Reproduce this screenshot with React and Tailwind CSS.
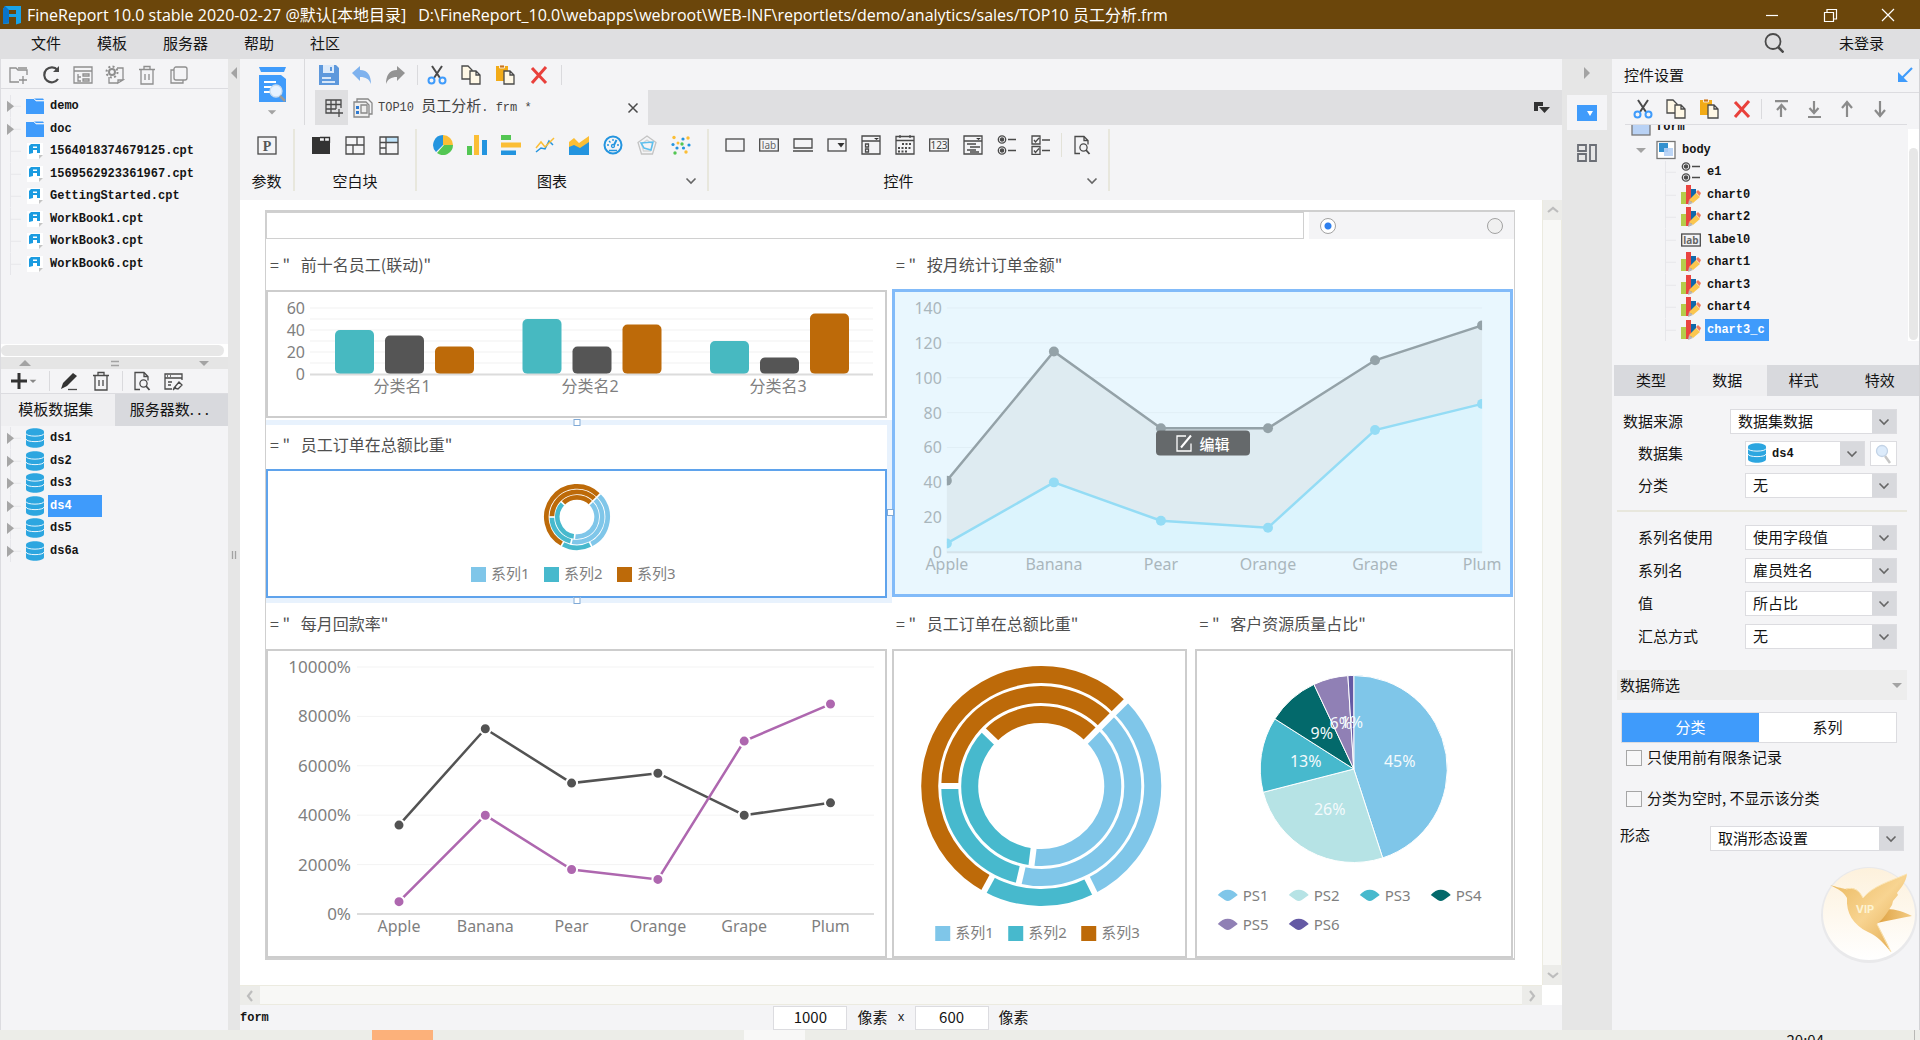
import React, { useState } from 'react';

const files = [
  { name: 'demo', folder: true },
  { name: 'doc', folder: true },
  { name: '1564018374679125.cpt' },
  { name: '1569562923361967.cpt' },
  { name: 'GettingStarted.cpt' },
  { name: 'WorkBook1.cpt' },
  { name: 'WorkBook3.cpt' },
  { name: 'WorkBook6.cpt' },
];

const datasets = ['ds1', 'ds2', 'ds3', 'ds4', 'ds5', 'ds6a'];

const widgets = [
  { name: 'e1', icon: 'radio' },
  { name: 'chart0', icon: 'chart' },
  { name: 'chart2', icon: 'chart' },
  { name: 'label0', icon: 'label' },
  { name: 'chart1', icon: 'chart' },
  { name: 'chart3', icon: 'chart' },
  { name: 'chart4', icon: 'chart' },
  { name: 'chart3_c', icon: 'chart' },
];

const fruits = ['Apple', 'Banana', 'Pear', 'Orange', 'Grape', 'Plum'];

const SKY = '#7fc6e9';
const TEAL = '#47b9cd';
const BROWN = '#bd6a09';
const DARK = '#555555';

/* ---------- icons ---------- */

const Icon = ({ children, className = 'size-5', box = '0 0 20 20' }) => (
  <svg viewBox={box} className={`shrink-0 ${className}`} fill="none" stroke="#4a4a4a" strokeWidth="1.3" aria-hidden="true">
    {children}
  </svg>
);

const Logo = () => (
  <Icon className="size-5">
    <g stroke="none">
      <path d="M3 1h16v17l-5 1.5V12H7v6.5L1 19V4z" fill="#1aa3e8" />
      <path d="M3 1L1 4v15l6-1.5V5z" fill="#0b74c9" />
      <path d="M7 5h7v4H7z" fill="#6b460b" />
    </g>
  </Icon>
);

const FolderIcon = () => (
  <Icon className="size-[18px]" box="0 0 18 18">
    <path d="M0 2h8l2 2h8v13H0z" fill="#3f9bfb" stroke="none" />
    <path d="M8 1.5h9l1 1.5H10z" fill="#3f9bfb" stroke="none" />
    <path d="M8 2l2 2h8" stroke="#d8ebff" strokeWidth="0.8" />
  </Icon>
);

const FileIcon = () => (
  <Icon className="size-[18px]" box="0 0 18 18">
    <path d="M1 1h16v12l-4 4H1z" fill="#fff" stroke="none" />
    <path d="M17 13h-4v4z" fill="#c4c4c4" stroke="none" />
    <path d="M5 2h9v9h-3V8H7v3l-4 1V4z" fill="#1b9be0" stroke="none" />
    <path d="M7 4.5h4V6H7z" fill="#fff" stroke="none" />
  </Icon>
);

const DbIcon = () => (
  <Icon>
    <path d="M1 4c0-5 18-5 18 0v12c0 5-18 5-18 0z" fill="#2ca6e0" stroke="none" />
    <path d="M1 5.5c0 3.500 18 3.500 18 0M1 11c0 3.500 18 3.500 18 0" stroke="#eaf6fd" strokeWidth="1" />
  </Icon>
);

const ScissorsIcon = () => (
  <Icon>
    <path d="M5 1l8 12M15 1L7 13" strokeWidth="2" />
    <circle cx="4.5" cy="15.5" r="3" stroke="#3f9bfb" strokeWidth="2" />
    <circle cx="15.5" cy="15.5" r="3" stroke="#3f9bfb" strokeWidth="2" />
  </Icon>
);

const CopyIcon = () => (
  <Icon>
    <path d="M1 1h6l4 4v9H1z" fill="#fff8e6" />
    <path d="M9 6h6l4 4v9H9zM15 6v4h4" fill="#fff8e6" />
  </Icon>
);

const PasteIcon = () => (
  <Icon>
    <path d="M1 1h12v15H1z" fill="#f2ab17" stroke="none" />
    <path d="M4.5 0h5v3h-5z" fill="#c8741e" stroke="#fff" strokeWidth="0.8" />
    <path d="M9 6h6l4 4v9H9zM15 6v4h4" fill="#fff8e6" />
  </Icon>
);

const DeleteIcon = () => (
  <Icon>
    <path d="M3 3l14 15M17 2L3 18" stroke="#e9403b" strokeWidth="3" />
  </Icon>
);

const TrashIcon = ({ color = '#8e8e8e' }) => (
  <Icon>
    <path d="M2 4.5h16M7 4V1.5h6V4M4 5v14h12V5M8 9v6M12 9v6" stroke={color} />
  </Icon>
);

const LabelIcon = () => (
  <Icon>
    <rect x="0.7" y="4" width="18.6" height="12" />
    <text x="10" y="14" textAnchor="middle" fontSize="10" fill="#666" stroke="none" fontFamily="Noto Sans">lab</text>
  </Icon>
);

const RadioListIcon = () => (
  <Icon>
    <circle cx="5" cy="4.5" r="3.7" />
    <circle cx="5" cy="4.5" r="1.6" fill="#4a4a4a" />
    <circle cx="5" cy="15.5" r="3.7" />
    <circle cx="5" cy="15.5" r="1.6" fill="#4a4a4a" />
    <path d="M11 4.5h8M11 15.5h8" />
  </Icon>
);

const ChartWidgetIcon = () => (
  <Icon>
    <g stroke="none">
      <path d="M0 7h5v12H0z" fill="#b5cc4b" />
      <path d="M5 0h5v19H5z" fill="#ea4440" />
      <path d="M10 4h5v9l-5 5z" fill="#1068ab" />
      <path d="M8 15l7-7 4 4-7 6z" fill="#fbc64f" />
      <path d="M15 7l2-2 3 3-1.500 3z" fill="#f2785b" />
      <path d="M8 15l4 3-5 2z" fill="#b9b9b9" />
    </g>
  </Icon>
);

const DocSearchIcon = () => (
  <Icon>
    <path d="M8 18.5H3v-17h9l4 4v4M12 1.5v4h4" />
    <circle cx="11.5" cy="12.5" r="3.6" />
    <path d="M14 15l3.5 4" strokeWidth="1.8" />
  </Icon>
);

const Chevron = ({ className = 'size-3' }) => (
  <Icon className={className} box="0 0 12 12">
    <path d="M1.5 3.5L6 8l4.5-4.5" stroke="#666" strokeWidth="1.6" />
  </Icon>
);

const Triangle = ({ d, className = 'size-3', color = '#a3a3a3' }) => (
  <Icon className={className} box="0 0 12 12">
    <path d={d} fill={color} stroke="none" />
  </Icon>
);

const UP = 'M0 9L6 3l6 6z';
const DOWN = 'M1 4h10L6 9z';
const LEFT = 'M9 0v12L3 6z';
const RIGHT = 'M3 0v12L9 6z';

const ArrowIcon = ({ d }) => (
  <Icon>
    <path d={d} stroke="#8b8b8b" strokeWidth="2.2" />
  </Icon>
);

const chartIcons = {
  饼图: (
    <g stroke="none">
      <path d="M10 10V0A10 10 0 003 17z" fill="#2394df" />
      <path d="M10 10V0a10 10 0 0110 10z" fill="#fbbe35" />
      <path d="M11 10h9A10 10 0 014 18z" fill="#53c653" />
    </g>
  ),
  柱形图: (
    <g stroke="none">
      <path d="M0 11h5v9H0z" fill="#53c653" />
      <path d="M7 0h5v20H7z" fill="#fbbe35" />
      <path d="M15 5h5v15h-5z" fill="#2394df" />
    </g>
  ),
  条形图: (
    <g stroke="none">
      <path d="M0 0h10v5H0z" fill="#53c653" />
      <path d="M0 7.5h20v5H0z" fill="#fbbe35" />
      <path d="M0 15.500h15v5H0z" fill="#2394df" />
    </g>
  ),
  折线图: (
    <g strokeWidth="1.5">
      <path d="M1 17l5-4 4 1 4-8 4 4" stroke="#2394df" />
      <path d="M1 13l5-6 4 5 9-9" stroke="#fbbe35" />
    </g>
  ),
  面积图: (
    <g stroke="none">
      <path d="M0 7l5-4 5 5 10-7v12H0z" fill="#fbbe35" />
      <path d="M0 12l5-2 6 3 9-6v13H0z" fill="#2394df" />
    </g>
  ),
  仪表盘: (
    <g stroke="#2394df">
      <circle cx="10" cy="10" r="8.5" strokeWidth="2" />
      <path d="M4 10h2M14 10h2M10 4v2M6 6l1.5 1.5M6 15.5h8" />
      <path d="M13.5 5L11 10" strokeWidth="2" />
      <circle cx="10" cy="11" r="1.5" />
    </g>
  ),
  雷达图: (
    <g>
      <path d="M10 1l9 6.5L15.5 19h-11L1 7.5z" stroke="#c4c4c4" />
      <path d="M10 5l5.5 4-2 7h-7l-2-7z" stroke="#d5d5d5" />
      <path d="M4 8l12-1-2 8-7-2z" stroke="#5cbfee" strokeWidth="1.5" />
    </g>
  ),
  散点图: (
    <g stroke="none">
      <g fill="#fbbe35"><circle cx="3" cy="2.5" r="1.7" /><circle cx="17" cy="3" r="1.7" /><circle cx="7" cy="8" r="1.5" /><circle cx="15" cy="17" r="1.7" /></g>
      <g fill="#2394df"><circle cx="12" cy="4" r="1.6" /><circle cx="2" cy="9.5" r="1.6" /><circle cx="18" cy="10" r="1.6" /><circle cx="12.5" cy="13" r="1.6" /><circle cx="6" cy="13" r="1.6" /></g>
      <g fill="#53c653"><circle cx="11" cy="9" r="1.7" /><circle cx="4" cy="18" r="1.7" /></g>
    </g>
  ),
};

const controlIcons = {
  文本框: <rect x="1" y="4" width="18" height="12" />,
  标签: (
    <>
      <rect x="0.7" y="4" width="18.6" height="12" />
      <text x="10" y="14" textAnchor="middle" fontSize="10" fill="#666" stroke="none" fontFamily="Noto Sans">lab</text>
    </>
  ),
  按钮: <path d="M1 4h18v9H1zM0 16h20" />,
  下拉框: <><rect x="1" y="4" width="18" height="12" /><path d="M10.5 8h7L14 12.5z" fill="#333" stroke="none" /></>,
  下拉复选框: <><path d="M1 1h18v18H1zM1 6h18M4.5 9h3v3h-3zM4.5 14h3v3h-3z" /><path d="M13 3h5l-2.500 2z" fill="#333" stroke="none" /></>,
  日期: <><path d="M1 1.5h18V19H1zM1 5.5h18M5 0v3M15 0v3" /><path d="M7 9h10M3 13h14M3 16.5h9" strokeDasharray="2 1.5" strokeWidth="2" /></>,
  数字: (
    <>
      <rect x="0.7" y="4" width="18.6" height="12" />
      <text x="10" y="13.5" textAnchor="middle" fontSize="10" fill="#444" stroke="none" fontFamily="Noto Sans">123</text>
    </>
  ),
  下拉树: <><path d="M1 1h18v18H1zM1 6h18M4 9h9M7 12h10M4 15h9M7 17h9" /><path d="M13 3h5l-2.500 2z" fill="#333" stroke="none" /></>,
  单选按钮组: (
    <>
      <circle cx="5" cy="4.5" r="3.7" /><circle cx="5" cy="4.5" r="1.6" fill="#4a4a4a" />
      <circle cx="5" cy="15.5" r="3.7" /><circle cx="5" cy="15.5" r="1.6" fill="#4a4a4a" />
      <path d="M11 4.5h8M11 15.5h8" />
    </>
  ),
  复选框组: <path d="M1 1h8v8H1zM1 11.5h8v8H1zM3 5l1.5 2L8 3M3 15.5l1.5 2L8 13.5M11 5h8M11 15.500h8" />,
};

/* ---------- small building blocks ---------- */

const IconButton = ({ label, children, className = '' }) => (
  <button aria-label={label} className={`flex size-5 shrink-0 items-center justify-center ${className}`}>
    {children}
  </button>
);

const TreeBranch = ({ arrow }) => (
  <svg viewBox="0 0 22 22" preserveAspectRatio="none" className="h-full w-[22px] shrink-0" aria-hidden="true">
    <path d="M9.5 0v22M10 11h10" stroke="#e6e6ea" fill="none" />
    {arrow && <path d="M6 5.5v11l7-5.5z" fill="#a6a6a6" />}
  </svg>
);

const Select = ({ id, value, className, icon }) => (
  <div className={`relative h-[25px] border border-[#dcdce0] bg-white ${className}`}>
    {icon && <span className="pointer-events-none absolute top-px left-px">{icon}</span>}
    <select
      id={id}
      className={`block h-full w-full appearance-none bg-transparent leading-5 outline-none ${icon ? "pl-[26px] font-['Liberation_Mono',monospace] text-[12px] font-bold" : 'pb-[2px] pl-[7px]'}`}
    >
      <option>{value}</option>
    </select>
    <span className="pointer-events-none absolute inset-y-0 right-0 flex w-6 items-center justify-center bg-[#d8d9dd]">
      <Chevron />
    </span>
  </div>
);

const Field = ({ id, label, value }) => (
  <div className="flex items-center justify-between">
    <label htmlFor={id} className="pb-[2px]">{label}</label>
    <Select id={id} value={value} className="w-[152px]" />
  </div>
);

const Divider = ({ className = 'h-5' }) => <span className={`w-px shrink-0 bg-[#dadadd] ${className}`} />;

/* ---------- charts ---------- */

const Svg = ({ w, h, children }) => (
  <svg viewBox={`0 0 ${w} ${h}`} className="block h-full w-full" fontFamily='"Noto Sans", "Noto Sans CJK SC", sans-serif' fontSize="16">
    {children}
  </svg>
);

const BarChart = () => {
  const groups = [[40, 35, 25], [50, 25, 45], [30, 15, 55]];
  const colors = ['#47b9c1', DARK, BROWN];
  return (
    <Svg w={617} h={124}>
      {[10, 20, 30, 40, 50, 60].map((v) => (
        <path key={v} d={`M42 ${82 - v * 1.1}H605`} stroke="#f1f1f1" />
      ))}
      {[0, 20, 40, 60].map((v) => (
        <text key={v} x="37" y={88 - v * 1.1} textAnchor="end" fill="#7f7f7f">{v}</text>
      ))}
      {groups.map((g, i) =>
        g.map((v, j) => (
          <rect key={`${i}-${j}`} x={67 + i * 187.5 + j * 50} y={82 - v * 1.1} width="39" height={v * 1.1} rx="5" fill={colors[j]} />
        ))
      )}
      <path d="M42 82.5H605" stroke="#dcdcdc" strokeWidth="2" />
      {[1, 2, 3].map((n) => (
        <text key={n} x={134 + (n - 1) * 188} y="100" textAnchor="middle" fill="#7f7f7f">分类名{n}</text>
      ))}
    </Svg>
  );
};

const rings = [
  { r: 111.5, stops: [45, 153.5, 208.5, 405] },
  { r: 91.5, stops: [45, 193, 270, 405] },
  { r: 71.5, stops: [45, 187, 314, 405] },
];

const polar = (r, deg) => {
  const a = (deg * Math.PI) / 180;
  return [r * Math.sin(a), -r * Math.cos(a)];
};

const Donut = ({ cx, cy, scale = 1 }) => (
  <g transform={`translate(${cx} ${cy}) scale(${scale})`} fill="none">
    {rings.map(({ r, stops }) => (
      <g key={r}>
        {[SKY, TEAL, BROWN].map((color, i) => {
          const [x1, y1] = polar(r, stops[i]);
          const [x2, y2] = polar(r, stops[i + 1]);
          const large = stops[i + 1] - stops[i] > 180 ? 1 : 0;
          return <path key={color} d={`M${x1} ${y1}A${r} ${r} 0 ${large} 1 ${x2} ${y2}`} stroke={color} strokeWidth="17" />;
        })}
        {stops.slice(0, 3).map((s) => {
          const [x1, y1] = polar(r - 10, s);
          const [x2, y2] = polar(r + 10, s);
          return <path key={s} d={`M${x1} ${y1}L${x2} ${y2}`} stroke="#fff" strokeWidth="6" />;
        })}
      </g>
    ))}
  </g>
);

const SeriesLegend = ({ x, y }) =>
  [SKY, TEAL, BROWN].map((color, i) => (
    <g key={color}>
      <rect x={x + i * 73} y={y} width="15" height="15" fill={color} />
      <text x={x + 20 + i * 73} y={y + 12} fontSize="15" fill="#7f7f7f">系列{i + 1}</text>
    </g>
  ));

const AreaChart = () => {
  const px = (i) => 51 + i * 107.4;
  const py = (v) => 261 - v * 1.75;
  const line = (data) => data.map((v, i) => `${px(i)},${py(v)}`).join(' ');
  const top = [41, 115, 71, 71, 110, 130];
  const bottom = [5, 40, 18, 14, 70, 85];
  return (
    <Svg w={615} h={303}>
      <defs>
        <clipPath id="plot"><rect x="51" y="0" width="537" height="270" /></clipPath>
      </defs>
      {[20, 40, 60, 80, 100, 120, 140].map((v) => (
        <path key={v} d={`M51 ${py(v)}H588`} stroke="#e1eff6" />
      ))}
      <polygon points={`51,261 ${line(top)} 588,261`} fill="#deebf1" />
      <polygon points={`51,261 ${line(bottom)} 588,261`} fill="#dcf4fd" />
      <path d="M51 261H588" stroke="#d5e3ea" strokeWidth="2" />
      <g clipPath="url(#plot)">
        <polyline points={line(top)} fill="none" stroke="#94a2a8" strokeWidth="2.500" />
        {top.map((v, i) => <circle key={i} cx={px(i)} cy={py(v)} r="5" fill="#94a2a8" />)}
        <polyline points={line(bottom)} fill="none" stroke="#94dcf5" strokeWidth="2.500" />
        {bottom.map((v, i) => <circle key={i} cx={px(i)} cy={py(v)} r="5" fill="#94dcf5" />)}
      </g>
      <g fill="#a9b6bc">
        {[0, 20, 40, 60, 80, 100, 120, 140].map((v) => (
          <text key={v} x="46" y={py(v) + 6} textAnchor="end">{v}</text>
        ))}
        {fruits.map((f, i) => (
          <text key={f} x={px(i)} y="279" textAnchor="middle">{f}</text>
        ))}
      </g>
    </Svg>
  );
};

const LineChart = () => {
  const px = (i) => 131 + i * 86.3;
  const py = (v) => 263 - v * 0.0247;
  const series = [
    { color: '#535353', data: [3600, 7500, 5300, 5700, 4000, 4500] },
    { color: '#ae67af', data: [500, 4000, 1800, 1400, 7000, 8500] },
  ];
  return (
    <Svg w={617} h={305}>
      {[2000, 4000, 6000, 8000, 10000].map((v) => (
        <path key={v} d={`M89 ${py(v)}H606`} stroke="#f3f3f3" />
      ))}
      <path d="M89 263H606" stroke="#dcdcdc" strokeWidth="2" />
      {series.map(({ color, data }) => (
        <g key={color}>
          <polyline points={data.map((v, i) => `${px(i)},${py(v)}`).join(' ')} fill="none" stroke={color} strokeWidth="2.500" />
          {data.map((v, i) => (
            <circle key={i} cx={px(i)} cy={py(v)} r="5.5" fill={color} stroke="#fff" strokeWidth="2" />
          ))}
        </g>
      ))}
      <g fill="#7f7f7f">
        {[0, 2000, 4000, 6000, 8000, 10000].map((v) => (
          <text key={v} x="83" y={py(v) + 6} textAnchor="end" fontSize="17">{v}%</text>
        ))}
        {fruits.map((f, i) => (
          <text key={f} x={px(i)} y="281" textAnchor="middle">{f}</text>
        ))}
      </g>
    </Svg>
  );
};

const slices = [
  { name: 'PS1', value: 45, color: SKY, at: [202, 116] },
  { name: 'PS2', value: 26, color: '#b6e3e5', at: [132, 164] },
  { name: 'PS3', value: 13, color: TEAL, at: [108, 116] },
  { name: 'PS4', value: 9, color: '#03696b', at: [124, 88] },
  { name: 'PS5', value: 6, color: '#9080b5', at: [143, 78] },
  { name: 'PS6', value: 1, color: '#6459a4', at: [154, 77] },
];

const PieChart = () => {
  let start = 0;
  return (
    <Svg w={312} h={305}>
      <g transform="translate(156 118)">
        {slices.map((s) => {
          const [x1, y1] = polar(93.5, start);
          start += s.value * 3.6;
          const [x2, y2] = polar(93.5, start);
          return <path key={s.name} d={`M0 0L${x1} ${y1}A93.5 93.5 0 0 1 ${x2} ${y2}Z`} fill={s.color} stroke="#fff" strokeWidth="1" />;
        })}
      </g>
      {slices.map((s) => (
        <text key={s.name} x={s.at[0]} y={s.at[1]} textAnchor="middle" fill="#f4fafc">{s.value}%</text>
      ))}
      {slices.map((s, i) => {
        const x = 30 + (i % 4) * 71;
        const y = 244 + Math.floor(i / 4) * 29;
        return (
          <g key={s.name}>
            <path d={`M${x - 10} ${y}C${x - 4} ${y - 7} ${x + 4} ${y - 7} ${x + 10} ${y}L${x + 3} ${y + 5}Q${x} ${y + 7} ${x - 3} ${y + 5}Z`} fill={s.color} />
            <text x={x + 15} y={y + 6} fontSize="15" fill="#7f7f7f">{s.name}</text>
          </g>
        );
      })}
    </Svg>
  );
};

const BlockTitle = ({ children, className = 'h-[46px]' }) => (
  <h2 className={`flex items-center pb-[6px] pl-[4px] text-[16px] leading-6 whitespace-pre text-[#4f4f4f] ${className}`}>
    {`= "   ${children}"`}
  </h2>
);

const Handle = ({ className }) => (
  <span className={`absolute z-10 size-[7px] border border-[#7fa9d6] bg-white ${className}`} />
);

/* ---------- panels ---------- */

const TitleBar = () => (
  <header className="flex h-[29px] shrink-0 items-center bg-[#6b460b] pl-[2px] font-['Open_Sans','Noto_Sans_CJK_SC',sans-serif] text-[16px] text-white">
    <Logo />
    <span className="ml-[5px]">FineReport 10.0 stable 2020-02-27 @默认[本地目录]</span>
    <span className="ml-3 flex-1">D:\FineReport_10.0\webapps\webroot\WEB-INF\reportlets/demo/analytics/sales/TOP10 员工分析.frm</span>
    <div className="flex gap-[34px] pr-5">
      {[['最小化', 'M4 10.5h12'], ['还原', 'M4.5 7.5h9v9h-9zM7 7V4.5h9.500V14H14'], ['关闭', 'M4 4l12 12M16 4L4 16']].map(([label, d]) => (
        <button key={label} aria-label={label} className="flex h-7 w-6 items-center justify-center">
          <Icon><path d={d} stroke="#fff" strokeWidth="1.2" /></Icon>
        </button>
      ))}
    </div>
  </header>
);

const MenuBar = () => (
  <nav className="flex h-[30px] shrink-0 items-center bg-[#dfdfe1] pr-9 pb-[2px] pl-[31px]">
    <div className="flex flex-1 gap-9">
      {['文件', '模板', '服务器', '帮助', '社区'].map((m) => (
        <button key={m}>{m}</button>
      ))}
    </div>
    <IconButton label="搜索" className="mr-[55px]">
      <Icon>
        <circle cx="9" cy="8.5" r="7.5" strokeWidth="1.8" />
        <path d="M14 14l5.5 5.5" strokeWidth="2.5" />
      </Icon>
    </IconButton>
    <button>未登录</button>
  </nav>
);

const FilePanel = () => (
  <aside className="flex w-[228px] shrink-0 flex-col border-l border-[#dcdce0]">
    <div className="flex h-[30px] shrink-0 items-center gap-3 border-b border-[#dcdce0] pt-[2px] pl-2">
      <IconButton label="新建文件夹"><Icon><path d="M10 17H1V3h6l2 2h9v5M9 3h9M14 11v8M10 15h8" stroke="#8e8e8e" /></Icon></IconButton>
      <IconButton label="刷新"><Icon><path d="M16.5 5A7.5 7.5 0 1017 14" strokeWidth="2.2" /><path d="M18 1v6h-6z" fill="#4a4a4a" stroke="none" /></Icon></IconButton>
      <IconButton label="打开目录"><Icon><path d="M1 2h18v16H1zM1 6h18M5 9v7h3M5 12h3M10 9h6v2h-6zM10 14h6v2h-6z" stroke="#8e8e8e" /></Icon></IconButton>
      <IconButton label="设置"><Icon><path d="M12 3h6v12M4 12v6h9M13 18l5-3h-5z" stroke="#8e8e8e" /><circle cx="7" cy="7" r="3" stroke="#8e8e8e" strokeWidth="2" /><circle cx="7" cy="7" r="5.5" stroke="#8e8e8e" strokeWidth="2" strokeDasharray="2 2.3" /></Icon></IconButton>
      <IconButton label="删除"><TrashIcon /></IconButton>
      <IconButton label="复制"><Icon><path d="M5 5H2v13h12v-3" stroke="#8e8e8e" /><rect x="5" y="2" width="13" height="13" rx="2" stroke="#8e8e8e" /></Icon></IconButton>
    </div>
    <ul className="mt-[6px] grid h-[180px] shrink-0 auto-rows-fr font-['Liberation_Mono',monospace] text-[12px] font-bold">
      {files.map((f) => (
        <li key={f.name} className="flex items-center">
          <TreeBranch arrow={f.folder} />
          <span className="ml-[3px]">{f.folder ? <FolderIcon /> : <FileIcon />}</span>
          <span className="ml-[6px]">{f.name}</span>
        </li>
      ))}
    </ul>
    <div className="mt-[69px] h-[13px] shrink-0 bg-white py-px pr-1"><div className="h-[11px] rounded-full bg-[#e7e7e7]" /></div>
    <div className="flex h-3 shrink-0 items-center justify-between bg-[#e5e5e5] px-[18px]">
      <Triangle d={UP} />
      <Icon className="size-3" box="0 0 12 12"><path d="M2 4.5h8M2 8.5h8" stroke="#a3a3a3" /></Icon>
      <Triangle d={DOWN} />
    </div>
    <div className="flex h-[25px] shrink-0 items-center border-b border-[#dcdce0] pl-2">
      <button aria-label="新增" className="flex items-center"><Icon><path d="M10 2v16M2 10h16" strokeWidth="3" stroke="#333" /></Icon><Triangle d={DOWN} className="size-2" color="#888" /></button>
      <Divider className="ml-3 h-5" />
      <IconButton label="编辑" className="ml-[9px]"><Icon><path d="M2 18l2-6L14 2l4 3-10 10z" fill="#333" stroke="none" /><path d="M9 18.5h9" /></Icon></IconButton>
      <IconButton label="删除" className="ml-3"><TrashIcon color="#4a4a4a" /></IconButton>
      <Divider className="ml-[11px] h-5" />
      <IconButton label="预览" className="ml-[9px]"><DocSearchIcon /></IconButton>
      <IconButton label="连接" className="ml-3"><Icon><path d="M8 18H1V3h17v6M1 7h17M4 11h4M4 14h3M3 5h1M6 5h1" /><path d="M10 17l5-6 3 3-4 4zM9 19l3-3" /></Icon></IconButton>
    </div>
    <div className="grid h-[32px] shrink-0 grid-cols-2" role="tablist">
      <button role="tab" aria-selected="true" className="bg-[#efeff1] pr-1 pb-[2px]">模板数据集</button>
      <button role="tab" aria-selected="false" className="bg-[#d8d9dd] pr-1 pb-[2px]">服务器数. . .</button>
    </div>
    <ul className="mt-px grid h-[135px] shrink-0 auto-rows-fr font-['Liberation_Mono',monospace] text-[12px] font-bold">
      {datasets.map((d) => (
        <li key={d} className="flex items-center">
          <TreeBranch arrow />
          <span className="ml-[2px]"><DbIcon /></span>
          <span className={`ml-[3px] flex h-full w-[54px] items-center pl-[2px] ${d === 'ds4' ? 'bg-[#3f9bfb] text-white' : ''}`}>{d}</span>
        </li>
      ))}
    </ul>
  </aside>
);

const RibbonGroup = ({ label, more, children, className }) => (
  <section className={`flex shrink-0 flex-col justify-between border-r-2 border-[#e8e7dd] ${className}`}>
    <div className="flex h-8 items-center justify-center gap-[14px]">{children}</div>
    <div className={`relative flex justify-center leading-5 ${more ? 'pr-5' : ''}`}>
      {label}
      {more && <button aria-label={`更多${label}`} className="absolute top-1 right-[10px]"><Chevron /></button>}
    </div>
  </section>
);

const Ribbon = () => (
  <div className="bg-[#f4f4f6]">
    <div className="flex h-[66px]">
      <button aria-label="预览" className="flex w-[64px] flex-col items-center pt-2">
        <Icon className="h-9 w-[27px]" box="0 0 27 36">
          <g stroke="none">
            <path d="M0 0h27l-2 5H2z" fill="#3f9bfb" />
            <path d="M0 8h22l5 4v23H0z" fill="#3f9bfb" />
            <path d="M5 14h12v2H5zM5 19h8v2H5zM5 24h7v2H5z" fill="#fff" />
          </g>
          <circle cx="17" cy="24" r="6" fill="#e6f2ff" stroke="#c9dcef" />
          <path d="M21 29l5 5" stroke="#999" strokeWidth="2.5" />
        </Icon>
        <Triangle d={DOWN} className="mt-1 size-[10px]" />
      </button>
      <div className="flex min-w-0 flex-1 flex-col">
        <div className="flex h-[31px] items-center border-l border-[#dadadd] pl-[14px]">
          <div className="flex items-center gap-[13px]">
            <IconButton label="保存">
              <Icon><path d="M0 0h17l3 3v17H0z" fill="#5d98dc" stroke="none" /><path d="M4 0h11v8H4z" fill="#dceafa" stroke="none" /><path d="M11 2h2v4h-2z" fill="#5d98dc" stroke="none" /><path d="M3 13h9M3 17h13" stroke="#fff" /></Icon>
            </IconButton>
            <IconButton label="撤销"><Icon><path d="M0 8l8-7v4c8 0 11 6 11 14-2-5-5-7-11-7v4z" fill="#7fb2ee" stroke="none" /></Icon></IconButton>
            <IconButton label="重做"><Icon><path d="M20 8l-8-7v4C4 5 1 11 1 19c2-5 5-7 11-7v4z" fill="#939393" stroke="none" /></Icon></IconButton>
          </div>
          <Divider className="mr-[9px] ml-3 h-5" />
          <div className="flex items-center gap-[14px]">
            <IconButton label="剪切"><ScissorsIcon /></IconButton>
            <IconButton label="复制"><CopyIcon /></IconButton>
            <IconButton label="粘贴"><PasteIcon /></IconButton>
            <IconButton label="删除"><DeleteIcon /></IconButton>
          </div>
          <Divider className="ml-3 h-5" />
        </div>
        <div className="flex flex-1 border-l border-[#dadadd] pl-[10px]">
          <div className="flex flex-1 items-center bg-[#dfdfe1] pr-3">
            <button aria-label="新建" className="flex h-full w-[33px] items-center justify-center">
              <Icon className="ml-1 size-5"><path d="M11 15H2V2h15v8M2 6.5h15M2 11h10M7 2v13M12 2v9M15 11v8M11 15h8" /></Icon>
            </button>
            <div className="flex h-full w-[300px] items-center bg-[#f4f4f6] pr-[9px] pl-[5px] text-[#444]">
              <Icon><path d="M4 4V1h11l4 4v11h-3" stroke="#888" /><path d="M1 4h12l3 3v12H1z" fill="#eee" stroke="#888" /><path d="M3 8h3v3H3zM3 13h3v3H3z" fill="#2f7ad1" stroke="none" /><path d="M8 7h6v8H8z" stroke="#888" /></Icon>
              <span className="ml-[5px] flex-1 font-['Liberation_Mono','Noto_Sans_CJK_SC',monospace] leading-5">
                <span className="text-[12px]">TOP10 </span>员工分析<span className="text-[12px]">. frm *</span>
              </span>
              <button aria-label="关闭标签"><Icon className="size-3" box="0 0 12 12"><path d="M1.5 1.5l9 9M10.5 1.5l-9 9" strokeWidth="1.5" /></Icon></button>
            </div>
            <span className="flex-1" />
            <button aria-label="标签列表"><Icon className="size-[18px]" box="0 0 18 18"><path d="M2 3h9v4H6v5H2z" fill="#333" stroke="none" /><path d="M7 8h11l-5.5 6z" fill="#333" stroke="none" /></Icon></button>
          </div>
        </div>
      </div>
    </div>
    <div className="flex h-[75px] pt-[4px] pb-[9px]">
      <RibbonGroup label="参数" className="w-[55px]">
        <IconButton label="参数">
          <Icon><rect x="1" y="2" width="18" height="17" /><text x="10" y="15.5" textAnchor="middle" fontSize="14" fontWeight="bold" fill="#555" stroke="none" fontFamily="Liberation Serif">P</text></Icon>
        </IconButton>
      </RibbonGroup>
      <RibbonGroup label="空白块" className="w-[122px]">
        <IconButton label="报表块"><Icon><path d="M1 2h8v5h10v12H1z" fill="#333" stroke="none" /><path d="M9 2.500h9.500V8M13.5 3v4M9 6.5h10" stroke="#333" /></Icon></IconButton>
        <IconButton label="绝对画布块"><Icon><path d="M1 2h18v17H1zM1 10h18M12 2v8M8 10v9" /></Icon></IconButton>
        <IconButton label="tab块"><Icon><path d="M7 2h12v5H7z" fill="#bfe3fa" stroke="none" /><path d="M1 2h18v17H1zM1 7.500h18M7 2v17M7 13h-6" /></Icon></IconButton>
      </RibbonGroup>
      <RibbonGroup label="图表" more className="w-[292px]">
        {Object.keys(chartIcons).map((k) => (
          <IconButton key={k} label={k}><Icon>{chartIcons[k]}</Icon></IconButton>
        ))}
      </RibbonGroup>
      <RibbonGroup label="控件" more className="w-[401px]">
        {Object.keys(controlIcons).map((k) => (
          <IconButton key={k} label={k}><Icon>{controlIcons[k]}</Icon></IconButton>
        ))}
        <span className="-mx-[4px] h-6 w-px bg-[#e3e2d8]" />
        <IconButton label="预定义控件"><DocSearchIcon /></IconButton>
      </RibbonGroup>
    </div>
  </div>
);

const Canvas = () => (
  <div className="min-w-0 flex-1 pt-[10px] pr-[27px] pb-[25px] pl-[25px]">
    <div className="border-x border-y-2 border-[#cfcfcf]">
      <div className="flex h-[27px] gap-[5px]">
        <input aria-label="label0" className="min-w-0 flex-1 border border-[#d0d0d0] bg-white px-2" />
        <div className="flex w-[205px] items-center justify-between bg-[#f4f4f6] px-[11px]">
          {['a', 'b'].map((v) => (
            <input
              key={v}
              type="radio"
              name="e1"
              aria-label={`e1 ${v}`}
              defaultChecked={v === 'a'}
              className="size-4 appearance-none rounded-full border border-[#a2a2a2] bg-[#f0f0f0] checked:bg-[radial-gradient(#2f80ee_0_3px,#fff_4px)]"
            />
          ))}
        </div>
      </div>
      <div className="mt-[5px] grid grid-cols-[626fr_622fr]">
        <div className="flex flex-col">
          <BlockTitle>前十名员工(联动)</BlockTitle>
          <div className="mr-[5px] h-[128px] border-2 border-[#cdcdcd]"><BarChart /></div>
          <div className="relative mt-[2px] border-y-[5px] border-r-[5px] border-[#e8f2fd]">
            <BlockTitle className="h-[44px]">员工订单在总额比重</BlockTitle>
            <div className="h-[129px] border-2 border-[#5fa3ec]">
              <Svg w={617} h={125}>
                <Donut cx={309} cy={46} scale={0.275} />
                <SeriesLegend x={203} y={96} />
              </Svg>
            </div>
            <Handle className="-top-[6px] left-1/2 -translate-x-1/2" />
            <Handle className="-bottom-[6px] left-1/2 -translate-x-1/2" />
            <Handle className="top-[84px] -right-[7px]" />
          </div>
        </div>
        <div className="flex flex-col pr-px">
          <BlockTitle className="h-[45px]">按月统计订单金额</BlockTitle>
          <div className="relative h-[308px] border-[3px] border-[#82bbf9] bg-[#e9f7fe]">
            <AreaChart />
            <button className="absolute top-1/2 left-1/2 flex h-[25px] w-[94px] -translate-x-1/2 -translate-y-1/2 items-center justify-center gap-[6px] rounded-sm bg-[#65696b] font-medium text-white">
              <Icon className="size-[18px]" box="0 0 18 18"><path d="M11 1.500H2v15h14V9" stroke="#fff" /><path d="M6 13L16 1" stroke="#fff" strokeWidth="2" /></Icon>
              编辑
            </button>
          </div>
        </div>
      </div>
      <div className="grid grid-cols-[626fr_622fr]">
        <div className="pr-[5px]">
          <BlockTitle>每月回款率</BlockTitle>
          <div className="h-[309px] border-2 border-[#cdcdcd]"><LineChart /></div>
        </div>
        <div className="grid grid-cols-[295fr_317fr] gap-x-2 pr-px">
          <div>
            <BlockTitle>员工订单在总额比重</BlockTitle>
            <div className="h-[309px] border-2 border-[#cdcdcd]">
              <Svg w={291} h={305}>
                <Donut cx={147} cy={135} />
                <SeriesLegend x={41} y={275} />
              </Svg>
            </div>
          </div>
          <div>
            <BlockTitle>客户资源质量占比</BlockTitle>
            <div className="h-[309px] border-2 border-[#cdcdcd]"><PieChart /></div>
          </div>
        </div>
      </div>
    </div>
  </div>
);

const ScrollButton = ({ label, d }) => (
  <button aria-label={label} className="flex size-5 shrink-0 items-center justify-center bg-[#ecece9]">
    <Icon className="size-3" box="0 0 12 12"><path d={d} stroke="#bdbdbd" strokeWidth="2.2" /></Icon>
  </button>
);

const StatusBar = () => (
  <footer className="grid h-[25px] shrink-0 grid-cols-[1fr_auto_1fr] items-center bg-[#f4f4f6]">
    <span className="font-['Liberation_Mono',monospace] text-[12px] font-bold">form</span>
    <div className="flex items-center gap-[10px]">
      <input aria-label="宽度" defaultValue="1000" className="h-6 w-[74px] border border-[#dcdce0] bg-white pb-[2px] text-center" />
      <span className="pb-[2px]">像素</span>
      <span className="font-['Liberation_Mono',monospace] text-[12px]">x</span>
      <input aria-label="高度" defaultValue="600" className="h-6 w-[74px] border border-[#dcdce0] bg-white pb-[2px] text-center" />
      <span className="pb-[2px]">像素</span>
    </div>
  </footer>
);

const widgetIcon = { radio: <RadioListIcon />, chart: <ChartWidgetIcon />, label: <LabelIcon /> };

const WidgetTree = () => (
  <div className="flex h-[216px] shrink-0 font-['Liberation_Mono',monospace] text-[12px] font-bold">
    <div className="flex min-w-0 flex-1 flex-col justify-end overflow-hidden pl-[19px]">
      <ul className="grid h-[225px] shrink-0 auto-rows-fr">
        <li className="flex items-center">
          <Icon><rect x="1" y="1" width="18" height="17" fill="#b9d2f5" stroke="#777" /></Icon>
          <span className="ml-[5px]">form</span>
        </li>
        <li className="flex items-center">
          <Triangle d={DOWN} className="ml-1 size-3" />
          <Icon className="ml-[9px] size-5"><rect x="1" y="1.5" width="18" height="17" fill="#fff" stroke="#777" /><path d="M3 3h9v9H3z" fill="#3390cf" stroke="none" /><path d="M8 8h9v8H8z" fill="#b5d0f5" stroke="none" opacity="0.9" /></Icon>
          <span className="ml-[6px]">body</span>
        </li>
        {widgets.map((w) => (
          <li key={w.name} className="flex items-center pl-[25px]">
            <TreeBranch />
            <span className="ml-[3px]">{widgetIcon[w.icon]}</span>
            <span className={`ml-[4px] flex h-full items-center px-[2px] ${w.name === 'chart3_c' ? 'bg-[#3f9bfb] pr-1 text-white' : ''}`}>{w.name}</span>
          </li>
        ))}
      </ul>
    </div>
    <div className="mt-[4px] w-[11px] bg-white px-px pt-[19px]"><div className="h-[192px] rounded-full bg-[#e7e7e7]" /></div>
  </div>
);

const VipBadge = () => (
  <svg viewBox="0 0 100 100" className="size-[100px]" role="img" aria-label="VIP">
    <defs>
      <linearGradient id="disc" x1="0" y1="0" x2="0" y2="1"><stop offset="0" stopColor="#fdf1dc" /><stop offset="1" stopColor="#ffffff" /></linearGradient>
      <linearGradient id="bird" x1="0" y1="0" x2="1" y2="1"><stop offset="0" stopColor="#e9b75c" /><stop offset="0.5" stopColor="#f8d491" /><stop offset="1" stopColor="#dfa445" /></linearGradient>
      <linearGradient id="tail" x1="0" y1="0" x2="1" y2="0"><stop offset="0" stopColor="#dfa242" /><stop offset="1" stopColor="#f3cc85" /></linearGradient>
    </defs>
    <circle cx="50" cy="51" r="48" fill="#dddde0" opacity="0.5" />
    <circle cx="50" cy="50" r="46" fill="url(#disc)" />
    <path d="M68 45c9 0 17 3 25 7-11 2-22 4-35 7z" fill="url(#tail)" />
    <path d="M11 21c7 2 11 3 15 4 9-3 14 1 18 9C54 22 69 18 88 10c-1 8-6 14-10 19l1 2-5 6-1 4c-5 8-8 13-15 19 5 9 10 18 14 28-7-8-13-16-23-20-15-7-22-19-21-34-3-6-9-9-17-13z" fill="url(#bird)" />
    <path d="M27 25c8-2 13 1 17 9C54 22 69 18 88 10M58 60l14 28" fill="none" stroke="#fbe5b5" />
    <text x="46" y="49" textAnchor="middle" fontSize="11" fontWeight="bold" fill="#fdf3d2" fontFamily="Inter, sans-serif">VIP</text>
  </svg>
);

const PropertyPanel = () => {
  const [tab, setTab] = useState('数据');
  return (
    <aside className="flex w-[308px] shrink-0 flex-col border-r border-[#d3d3d6]">
      <div className="flex h-[33px] shrink-0 items-center justify-between pr-[6px] pb-[2px] pl-3">
        <h1>控件设置</h1>
        <button aria-label="收起"><Icon className="size-4" box="0 0 16 16"><path d="M15 1L4 12" stroke="#3f9bfb" strokeWidth="2.2" /><path d="M1 5v10h10z" fill="#3f9bfb" stroke="none" /></Icon></button>
      </div>
      <div className="shrink-0 border-t border-[#dcdce0] pr-3 pl-[13px]">
        <div className="flex h-8 items-center gap-[13px] border-b border-[#dcdce0] pl-2">
          <IconButton label="剪切"><ScissorsIcon /></IconButton>
          <IconButton label="复制"><CopyIcon /></IconButton>
          <IconButton label="粘贴"><PasteIcon /></IconButton>
          <IconButton label="删除"><DeleteIcon /></IconButton>
          <Divider className="-mx-[4px] h-5" />
          <IconButton label="置于顶层"><ArrowIcon d="M4 2.2h13M10 18V6M6 11l4.5-5 4.5 5" /></IconButton>
          <IconButton label="置于底层"><ArrowIcon d="M4 18h13M10 2v12M5.5 9l4.5 5 4.5-5" /></IconButton>
          <IconButton label="上移一层"><ArrowIcon d="M10 18V3M5 9l5-6 5 6" /></IconButton>
          <IconButton label="下移一层"><ArrowIcon d="M10 2v15M5 11l5 6 5-6" /></IconButton>
        </div>
      </div>
      <WidgetTree />
      <div role="tablist" className="mt-[24px] ml-[2px] grid h-[31px] shrink-0 grid-cols-4">
        {['类型', '数据', '样式', '特效'].map((t) => (
          <button key={t} role="tab" aria-selected={tab === t} onClick={() => setTab(t)} className={`pr-[2px] pb-[2px] ${tab === t ? 'bg-[#efeff1]' : 'bg-[#d8d9dd]'}`}>{t}</button>
        ))}
      </div>
      <div className="mt-[13px] flex flex-col gap-[7px] pr-[22px] pl-[26px]">
        <div className="-ml-[15px] flex items-center justify-between">
          <label htmlFor="source" className="pb-[2px]">数据来源</label>
          <Select id="source" value="数据集数据" className="w-[167px]" />
        </div>
        <div className="flex items-center justify-between">
          <label htmlFor="dataset" className="pb-[2px]">数据集</label>
          <div className="flex gap-[5px]">
            <Select id="dataset" value="ds4" className="w-[120px]" icon={<DbIcon />} />
            <button aria-label="预览数据" className="flex h-[25px] w-[27px] items-center justify-center border border-[#dcdce0] bg-white">
              <Icon><path d="M11 12l5 7" stroke="#c6c6c6" strokeWidth="2.5" /><circle cx="8" cy="7" r="5.5" fill="#dcebfb" stroke="#c3d3e6" /></Icon>
            </button>
          </div>
        </div>
        <Field id="category" label="分类" value="无" />
      </div>
      <hr className="mt-[12px] mr-3 ml-[5px] border-t-2 border-[#e8e7dd]" />
      <div className="mt-[13px] flex flex-col gap-2 pr-[22px] pl-[26px]">
        <Field id="nameby" label="系列名使用" value="使用字段值" />
        <Field id="series" label="系列名" value="雇员姓名" />
        <Field id="val" label="值" value="所占比" />
        <Field id="sum" label="汇总方式" value="无" />
      </div>
      <button className="mt-[21px] mr-3 ml-[5px] flex h-[30px] items-center justify-between bg-[#ededed] pr-1 pl-[3px]">
        数据筛选
        <Triangle d={DOWN} />
      </button>
      <div className="mt-[12px] mr-[22px] ml-[9px] grid h-[31px] shrink-0 grid-cols-2 border border-[#dcdce0] bg-white">
        <button className="bg-[#3f9bfb] pb-[2px] text-white">分类</button>
        <button className="pb-[2px]">系列</button>
      </div>
      <div className="mt-[3px] flex flex-col gap-[17px] pl-[14px]">
        {['只使用前有限条记录', '分类为空时, 不显示该分类'].map((t) => (
          <label key={t} className="flex h-6 items-center gap-[5px]">
            <input type="checkbox" className="size-4 appearance-none border border-[#a6a6a6] bg-[#f7f7f8] checked:bg-[#3f9bfb]" />
            <span className="pb-[2px]">{t}</span>
          </label>
        ))}
      </div>
      <div className="mt-[14px] mr-[15px] ml-2 flex items-start justify-between">
        <label htmlFor="shape">形态</label>
        <Select id="shape" value="取消形态设置" className="mt-px w-[194px]" />
      </div>
      <div className="mt-[13px] flex justify-end"><VipBadge /></div>
    </aside>
  );
};

const App = () => (
  <div className="flex h-screen flex-col overflow-hidden bg-[#f4f4f6] font-['Noto_Sans_CJK_SC','Noto_Sans',sans-serif] text-[15px] leading-5 text-[#141414]">
    <TitleBar />
    <MenuBar />
    <div className="flex min-h-0 flex-1">
      <FilePanel />
      <div className="flex w-3 shrink-0 flex-col items-center bg-[#e6e6e6] pt-2">
        <Triangle d={LEFT} className="size-3" />
        <Icon className="my-auto size-3" box="0 0 12 12"><path d="M4.5 2v8M7.5 2v8" stroke="#a3a3a3" /></Icon>
      </div>
      <main className="flex min-w-0 flex-1 flex-col bg-white">
        <Ribbon />
        <div className="flex min-h-0 flex-1">
          <div className="flex min-w-0 flex-1 flex-col">
            <div className="min-h-0 flex-1 overflow-hidden"><Canvas /></div>
            <div className="flex h-5 shrink-0 border-y border-[#ecebe0] bg-[#f8f8f6]">
              <ScrollButton label="向左" d="M8 1L4 6l4 5" />
              <span className="flex-1" />
              <ScrollButton label="向右" d="M4 1l4 5-4 5" />
            </div>
          </div>
          <div className="mb-5 flex w-5 shrink-0 flex-col justify-between border-x border-[#ecebe0] bg-[#f8f8f6]">
            <ScrollButton label="向上" d="M1 8l5-4 5 4" />
            <ScrollButton label="向下" d="M1 4l5 4 5-4" />
          </div>
        </div>
        <StatusBar />
      </main>
      <div className="flex w-[50px] shrink-0 flex-col items-center bg-[#e6e6e6] pt-2">
        <Triangle d={RIGHT} />
        <button aria-label="控件设置" className="mt-4 flex h-[35px] w-10 items-center justify-center bg-[#f4f4f6]">
          <Icon><rect x="0" y="2" width="20" height="16" fill="#3f9bfb" stroke="none" /><path d="M10 8h6l-3 5z" fill="#fff" stroke="none" /></Icon>
        </button>
        <button aria-label="组件库" className="mt-[13px]">
          <Icon><path d="M1 2h8v6H1zM1 11h8v7H1zM13 2h6v16h-6z" stroke="#6b6e75" strokeWidth="1.8" /></Icon>
        </button>
      </div>
      <PropertyPanel />
    </div>
    <div className="flex h-[10px] shrink-0 overflow-hidden bg-[#ecede8] pr-[5px]">
      <span className="ml-[372px] w-[61px] bg-[#fcb17a]" />
      <span className="ml-[311px] w-[61px] bg-[#f8f8f7]" />
      <span className="mr-[90px] ml-auto">20:04</span>
      <span className="w-px bg-[#b8b8b5]" />
    </div>
  </div>
);

export default App;
